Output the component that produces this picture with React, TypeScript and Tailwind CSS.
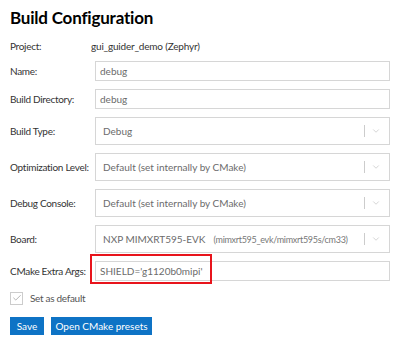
import { ChevronDown, Check } from "lucide-react";

const FONT = "font-['Lato',sans-serif]";

function Label({ children }: { children: React.ReactNode }) {
  return (
    <div className="w-[85px] shrink-0 whitespace-nowrap text-[10px] tracking-[-0.3px] text-[#333]">{children}</div>
  );
}

function TextBox({ value }: { value: string }) {
  return (
    <div className="flex h-[20px] w-[298px] items-center border border-[#d6d6d6] bg-white px-[4px] text-[10px] text-[#6b6b6b]">
      {value}
    </div>
  );
}

function Select({ value, hint }: { value: string; hint?: string }) {
  return (
    <div className="flex h-[28px] w-[298px] items-center border border-[#d6d6d6] bg-white pl-[7px] pr-[8px] text-[10px] text-[#6b6b6b]">
      <span className="flex-1 whitespace-nowrap">
        {value}
        {hint && <span className="ml-[8px] text-[9px] tracking-[-0.3px] text-[#777]">{hint}</span>}
      </span>
      <span className="h-[12px] w-px bg-[#ccc]" />
      <ChevronDown className="ml-[6px] h-[10px] w-[10px] text-[#bbb]" strokeWidth={1.5} />
    </div>
  );
}

export default function App() {
  return (
    <div className={`${FONT} h-[349px] w-[400px] overflow-hidden bg-white px-[10px] pt-[6px]`}>
      <h1 className="h-[24px] text-[17px] font-bold leading-[24px] tracking-[-0.2px] text-black">Build Configuration</h1>

      <div className="mt-[9px] flex h-[14px] items-center">
        <Label>Project:</Label>
        <span className="-ml-[4px] text-[10px] tracking-[-0.2px] text-[#333]">gui_guider_demo (Zephyr)</span>
      </div>

      <div className="mt-[8px] flex items-center">
        <Label>Name:</Label>
        <TextBox value="debug" />
      </div>
      <div className="mt-[8px] flex items-center">
        <Label>Build Directory:</Label>
        <TextBox value="debug" />
      </div>
      <div className="mt-[8px] flex items-center">
        <Label>Build Type:</Label>
        <Select value="Debug" />
      </div>
      <div className="mt-[8px] flex items-center">
        <Label>Optimization Level:</Label>
        <Select value="Default (set internally by CMake)" />
      </div>
      <div className="mt-[8px] flex items-center">
        <Label>Debug Console:</Label>
        <Select value="Default (set internally by CMake)" />
      </div>
      <div className="mt-[8px] flex items-center">
        <Label>Board:</Label>
        <Select value="NXP MIMXRT595-EVK" hint="(mimxrt595_evk/mimxrt595s/cm33)" />
      </div>
      <div className="relative mt-[8px] flex items-center">
        <Label>CMake Extra Args:</Label>
        <TextBox value={"SHIELD='g1120b0mipi'"} />
        {/* red highlight box drawn over the field */}
        <div className="pointer-events-none absolute left-[80px] top-[-7px] h-[30px] w-[122px] border-2 border-[#e8141c]" />
      </div>

      <div className="mt-[10px] flex h-[14px] items-center gap-[7px]">
        <span className="flex h-[13px] w-[13px] items-center justify-center border border-[#ccc] bg-white">
          <Check className="h-[10px] w-[10px] text-[#888]" strokeWidth={1.5} />
        </span>
        <span className="text-[10px] tracking-[-0.3px] text-[#555]">Set as default</span>
      </div>

      <div className="mt-[12px] flex gap-[7px]">
        <button className="h-[18px] w-[34px] bg-[#0e73c5] text-[10px] text-white">Save</button>
        <button className="h-[18px] w-[101px] bg-[#0e73c5] text-[10px] text-white">Open CMake presets</button>
      </div>
    </div>
  );
}
